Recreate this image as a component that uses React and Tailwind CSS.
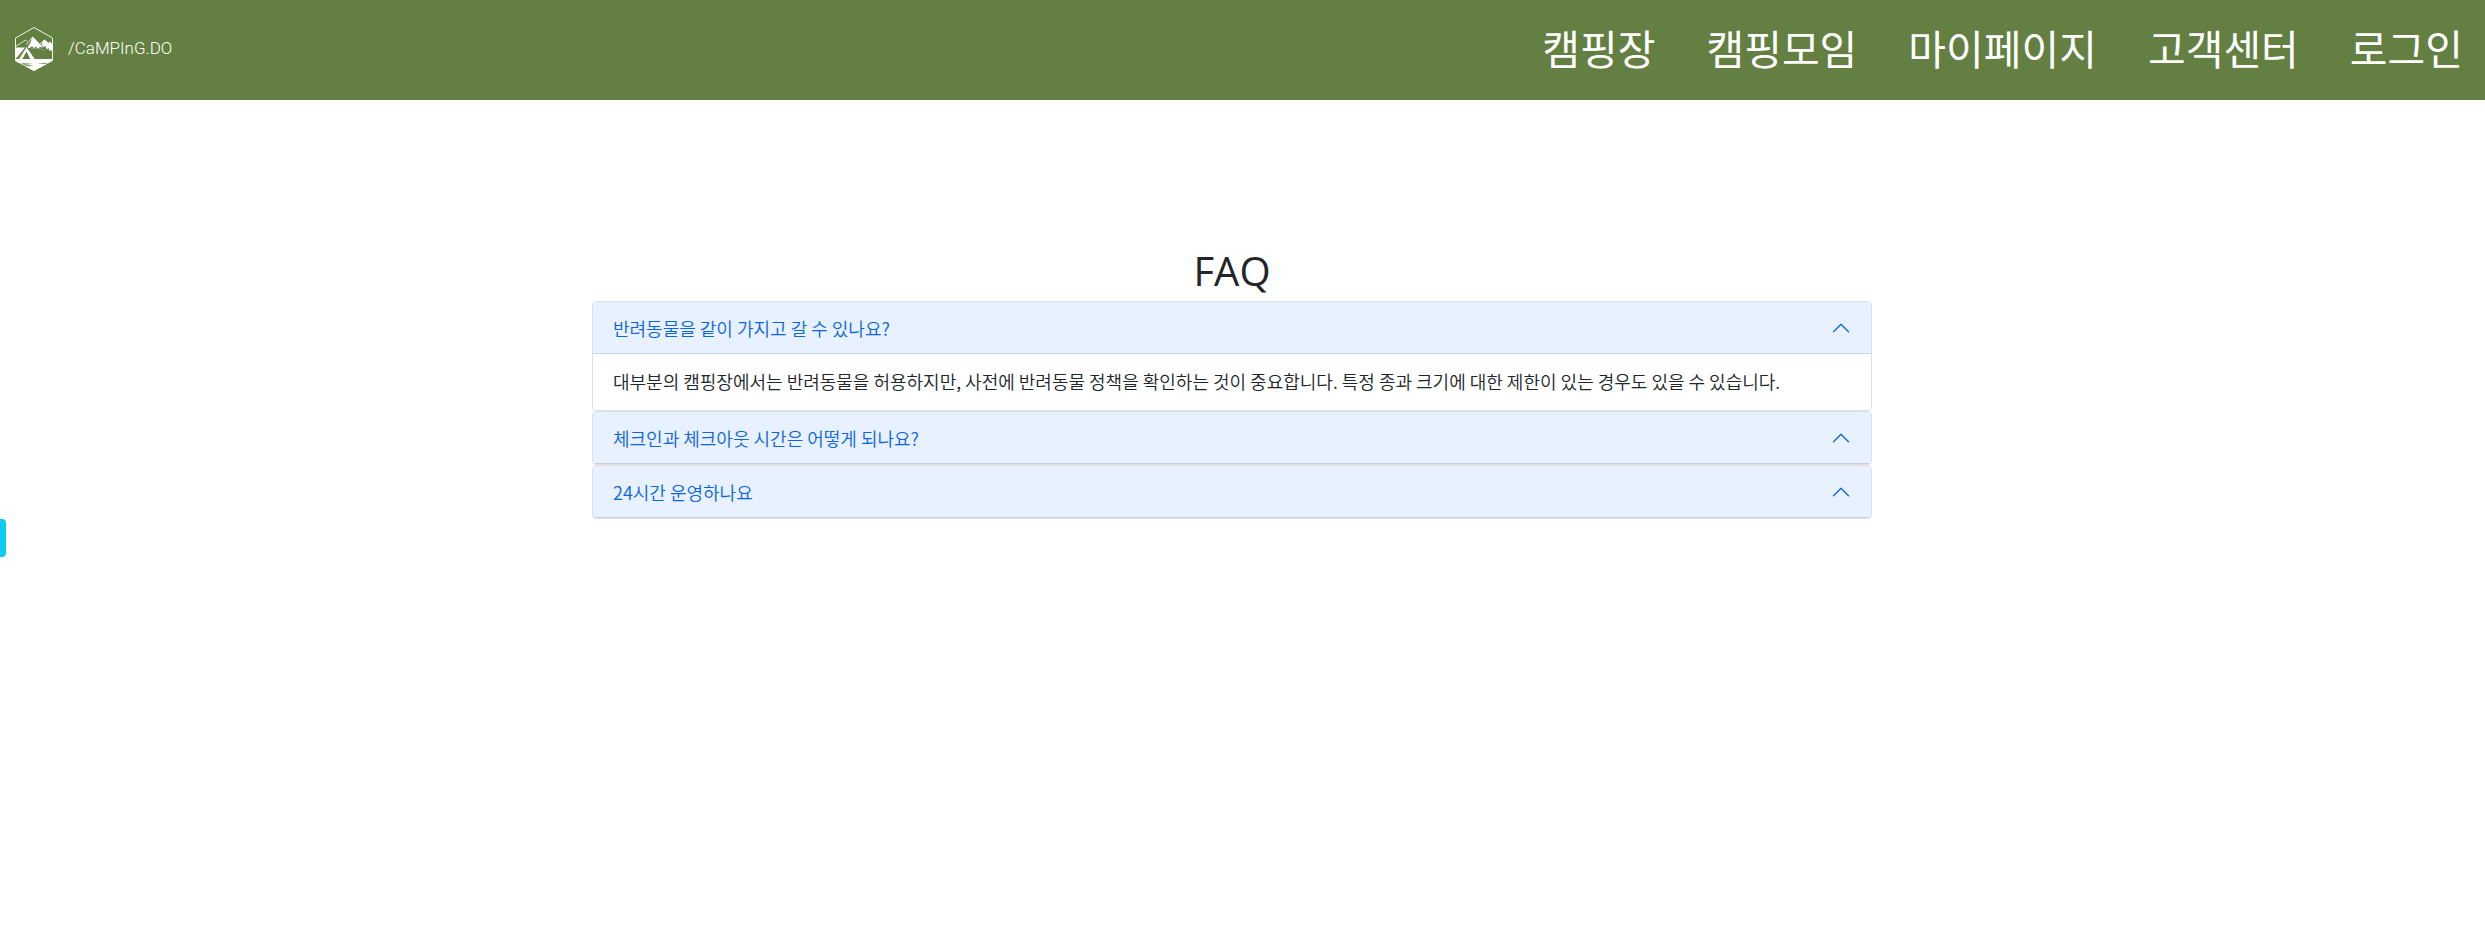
import { useState } from "react";

const NAV_ITEMS = ["캠핑장", "캠핑모임", "마이페이지", "고객센터", "로그인"];

const QUESTIONS = [
  {
    id: "pets",
    question: "반려동물을 같이 가지고 갈 수 있나요?",
    answer:
      "대부분의 캠핑장에서는 반려동물을 허용하지만, 사전에 반려동물 정책을 확인하는 것이 중요합니다. 특정 종과 크기에 대한 제한이 있는 경우도 있을 수 있습니다.",
  },
  { id: "checkin", question: "체크인과 체크아웃 시간은 어떻게 되나요?" },
  { id: "hours", question: "24시간 운영하나요" },
];

function CampLogo() {
  return (
    <svg viewBox="0 0 40 46" className="h-[46px] w-10 shrink-0" fill="none" aria-hidden="true">
      <path d="M20 1.500 38.500 12v22.500L20 44.500 1.500 34.500V12Z" stroke="#fff" strokeWidth="0.9" />
      <path d="M1.500 20.500 11.500 14l1.500 1.500" stroke="#fff" strokeWidth="0.8" />
      <path d="M12.500 18.500 18.500 11l7 7.500M26 18l4-4 3 3" stroke="#fff" strokeWidth="0.8" />
      <path d="M18.500 10.500l4 4 3.500 3.500 3 3.500-3-.5-2 1.500-2.500-2-1.500 2-2-2.500-2 2-2.500-.5 3-5Z" fill="#fff" />
      <path d="M30.500 13.500l4 3.500 1.500-1.500 2.500 3v8l-1.500-2.500-1.500 1-1-3-1.500 1.500-2-3.500-2 1-1.500-3Z" fill="#fff" />
      <path d="M1.500 21.500H11L2.500 32h-1Z" fill="#fff" />
      <path d="M12.500 21 4 33.500h4l4.500-8 4 8h4.500Z" fill="#fff" />
      <path d="M12 21 4.500 33.500" stroke="#638042" strokeWidth="0.8" />
      <path d="M17 22.500q10-1 14 2.500" stroke="#fff" strokeWidth="0.5" opacity="0.5" />
      <path d="M1.500 33h37v1.500l-4 2.300-12 .4 10 .9L20 45l-8.500-4.600 9-.9-11-.5 9-1.300-14-.7-3-2Z" fill="#fff" />
    </svg>
  );
}

function Chevron({ className }) {
  return (
    <svg viewBox="0 0 16 16" className={className} fill="#0c63e4" aria-hidden="true">
      <path
        fillRule="evenodd"
        d="M1.646 4.646a.5.5 0 0 1 .708 0L8 10.293l5.646-5.647a.5.5 0 0 1 .708.708l-6 6a.5.5 0 0 1-.708 0l-6-6a.5.5 0 0 1 0-.708z"
      />
    </svg>
  );
}

function FaqItem({ item }) {
  const [open, setOpen] = useState(true);
  const panelId = `faq-${item.id}`;
  return (
    <div className="overflow-hidden rounded border border-[#dfdfdf] bg-white">
      <h2>
        <button
          type="button"
          aria-expanded={open}
          aria-controls={panelId}
          onClick={() => setOpen(!open)}
          className="flex w-full items-center justify-between bg-[#e7f1ff] px-5 py-4 text-left text-lg leading-5 text-[#0c63e4] shadow-[inset_0_-1px_0_rgba(0,0,0,0.125)]"
        >
          {item.question}
          <Chevron className={open ? "size-5 shrink-0 rotate-180" : "size-5 shrink-0"} />
        </button>
      </h2>
      <div id={panelId} hidden={!open}>
        {item.answer && <p className="px-5 pt-[15px] pb-[17px] text-lg leading-6">{item.answer}</p>}
      </div>
    </div>
  );
}

export default function App() {
  return (
    <div className="font-['Noto_Sans_CJK_KR',sans-serif] font-[350] text-[#212529]">
      <header className="flex h-[100px] items-center justify-between bg-[#638042] pr-[22px] pb-0.5 pl-[14px] text-white">
        <a href="#" className="flex items-center gap-[14px]">
          <CampLogo />
          <span className="font-['Roboto',sans-serif] text-[17px] font-light">/CaMPInG.DO</span>
        </a>
        <nav className="flex items-center gap-[51px] pb-1 text-[41px] leading-[60px] font-normal">
          {NAV_ITEMS.map((label) => (
            <a key={label} href="#">
              {label}
            </a>
          ))}
        </nav>
      </header>
      <main>
        <div className="pt-[147px] pr-[21px]">
          <section className="mx-auto max-w-[1280px]">
            <h1 className="mb-1.5 text-center font-['Open_Sans',sans-serif] text-[40px] leading-[48px] font-normal">
              FAQ
            </h1>
            {QUESTIONS.map((item) => (
              <FaqItem key={item.id} item={item} />
            ))}
          </section>
        </div>
        <button type="button" aria-label="메뉴" className="block h-[38px] w-1.5 rounded-r bg-[#0dcaf0]" />
      </main>
    </div>
  );
}
